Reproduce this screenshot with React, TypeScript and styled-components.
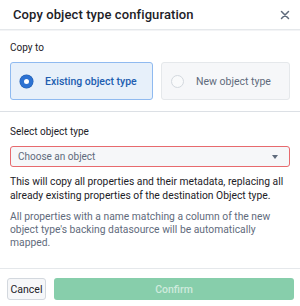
import styled, { createGlobalStyle } from "styled-components";

const GlobalStyle = createGlobalStyle`
  html, body {
    margin: 0;
    padding: 0;
    background: #ffffff;
  }
  body {
    font-family: Roboto, "Liberation Sans", sans-serif;
    color: #1c2127;
  }
  * {
    box-sizing: border-box;
  }
`;

export default function App() {
  return (
    <>
      <GlobalStyle />
      <StDialog>
        <StHeader>
          <StTitle>Copy object type configuration</StTitle>
          <StClose aria-label="Close">
            <svg width="10" height="10" viewBox="0 0 10 10">
              <path
                d="M1.5 1.5 L8.5 8.5 M8.5 1.5 L1.5 8.5"
                stroke="#5f6b7c"
                strokeWidth="1.5"
                strokeLinecap="round"
              />
            </svg>
          </StClose>
        </StHeader>

        <StSection $top={11}>
          <StLabel>Copy to</StLabel>
          <StCards>
            <StCard $selected>
              <StRadio $checked />
              <StCardText $selected>Existing object type</StCardText>
            </StCard>
            <StCard>
              <StRadio />
              <StCardText>New object type</StCardText>
            </StCard>
          </StCards>
        </StSection>

        <StDivider />

        <StSection $top={13}>
          <StLabel>Select object type</StLabel>
          <StSelect>
            <span>Choose an object</span>
            <StCaret />
          </StSelect>
          <StText>
            This will copy all properties and their metadata, replacing all
            already existing properties of the destination Object type.
          </StText>
          <StText $muted>
            All properties with a name matching a column of the new object
            type's backing datasource will be automatically mapped.
          </StText>
        </StSection>

        <StFooter>
          <StButton>Cancel</StButton>
          <StPrimary disabled>Confirm</StPrimary>
        </StFooter>
      </StDialog>
    </>
  );
}

const StDialog = styled.div`
  width: 300px;
  height: 306px;
  display: flex;
  flex-direction: column;
  background: #ffffff;
`;

const StHeader = styled.div`
  height: 30px;
  flex: none;
  display: flex;
  align-items: center;
  justify-content: space-between;
  padding: 0 10px 0 13px;
  border-bottom: 1px solid #e5e8eb;
  box-shadow: 0 1px 0 #f3f4f6;
`;

const StTitle = styled.h1`
  margin: 0;
  font-size: 13px;
  font-weight: 500;
  letter-spacing: 0.1px;
  color: #1c2127;
`;

const StClose = styled.button`
  border: none;
  background: none;
  padding: 0;
  width: 10px;
  height: 10px;
  display: flex;
  align-items: center;
  justify-content: center;
`;

const StSection = styled.div<{ $top: number }>`
  display: flex;
  flex-direction: column;
  padding: ${(p) => p.$top}px 10px 0;
`;

const StLabel = styled.div`
  font-size: 10px;
  line-height: 14px;
  color: #1c2127;
  margin-bottom: 7px;
`;

const StCards = styled.div`
  display: flex;
  gap: 8px;
`;

const StCard = styled.div<{ $selected?: boolean }>`
  height: 38px;
  flex: ${(p) => (p.$selected ? "0 0 143px" : "1")};
  display: flex;
  align-items: center;
  gap: 12px;
  padding: 0 9px;
  border-radius: 3px;
  border: 1px solid ${(p) => (p.$selected ? "#8fbaf0" : "#e5e8eb")};
  background: ${(p) => (p.$selected ? "#e7f0fa" : "#f6f7f9")};
`;

const StRadio = styled.span<{ $checked?: boolean }>`
  width: 13px;
  height: 13px;
  border-radius: 50%;
  flex: none;
  ${(p) =>
    p.$checked
      ? `background: #fff; border: 4px solid #2d72d2; box-shadow: 0 0 0 0.5px #215db0;`
      : `background: #f9fafb; border: 1px solid #d3d8de;`}
`;

const StCardText = styled.span<{ $selected?: boolean }>`
  font-size: 10.5px;
  white-space: nowrap;
  color: ${(p) => (p.$selected ? "#215db0" : "#5f6b7c")};
  font-weight: ${(p) => (p.$selected ? 500 : 400)};
`;

const StDivider = styled.div`
  height: 1px;
  flex: none;
  background: #dce0e5;
  margin-top: 11px;
`;

const StSelect = styled.div`
  height: 21px;
  display: flex;
  align-items: center;
  justify-content: space-between;
  padding: 0 11px 0 7px;
  border: 1px solid #e76a6e;
  border-radius: 3px;
  background: #f6f7f9;
  font-size: 10px;
  color: #5f6b7c;
  margin-bottom: 8px;
`;

const StCaret = styled.span`
  width: 0;
  height: 0;
  border-left: 3.5px solid transparent;
  border-right: 3.5px solid transparent;
  border-top: 4px solid #5f6b7c;
`;

const StText = styled.p<{ $muted?: boolean }>`
  margin: 0 0 7px;
  font-size: 10.3px;
  line-height: ${(p) => (p.$muted ? 13 : 14)}px;
  color: ${(p) => (p.$muted ? "#5f6b7c" : "#1c2127")};
`;

const StFooter = styled.div`
  margin-top: auto;
  flex: none;
  display: flex;
  gap: 8px;
  padding: 9px 6px 6px 7px;
  border-top: 1px solid #e5e8eb;
`;

const StButton = styled.button`
  height: 22px;
  width: 39px;
  padding: 0;
  font-family: inherit;
  font-size: 10.5px;
  color: #1c2127;
  background: #f6f7f9;
  border: 1px solid #d3d8de;
  border-radius: 3px;
`;

const StPrimary = styled.button`
  flex: 1;
  height: 22px;
  font-family: inherit;
  font-size: 10.5px;
  font-weight: 500;
  color: rgba(255, 255, 255, 0.6);
  background: #87ceab;
  border: none;
  border-radius: 3px;
`;
